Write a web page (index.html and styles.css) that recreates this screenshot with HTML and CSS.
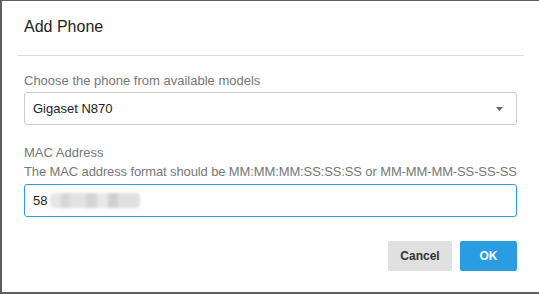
FILE: index.html
```html
<!DOCTYPE html>
<html lang="en">
<head>
  <meta charset="UTF-8" />
  <meta name="viewport" content="width=device-width, initial-scale=1.0" />
  <title>Add Phone</title>
  <link rel="stylesheet" href="styles.css">
</head>
<body>
  <div class="dialog">
    <div class="dialog-header">
      <h1>Add Phone</h1>
    </div>
    <form class="dialog-body" id="addPhoneForm">
      <label for="model">Choose the phone from available models</label>
      <div class="select-wrap">
        <select id="model" name="model">
          <option value="n870">Gigaset N870</option>
        </select>
        <svg class="caret" width="7" height="4" viewBox="0 0 7 4"><path d="M0 0H7L3.5 4Z" fill="#666"/></svg>
      </div>

      <label for="mac" class="mac-label">MAC Address</label>
      <div class="hint">The MAC address format should be MM:MM:MM:SS:SS:SS or MM-MM-MM-SS-SS-SS</div>
      <div class="input-wrap">
        <input type="text" id="mac" name="mac" value="58" />
        <span class="redacted"></span>
      </div>

      <div class="actions">
        <button type="button" class="btn btn-cancel">Cancel</button>
        <button type="submit" class="btn btn-ok">OK</button>
      </div>
    </form>
  </div>
</body>
</html>
```

FILE: styles.css
```css
html, body {
  margin: 0;
  height: 100%;
}
body {
  background: #5f5f5f;
  font-family: "Liberation Sans", Arial, sans-serif;
  padding: 1px 0 0 2px;
  box-sizing: border-box;
}
.dialog {
  background: #fff;
  height: 291px;
}
.dialog-header {
  margin: 0 15px;
  padding: 16px 7px 18px;
  border-bottom: 1px solid #dedede;
}
.dialog-header h1 {
  margin: 0;
  font-size: 16px;
  font-weight: normal;
  line-height: 20px;
  color: #222;
}
.dialog-body {
  padding: 17px 22px 0;
}
label, .hint {
  display: block;
  font-size: 13px;
  line-height: 16px;
  color: #777;
  white-space: nowrap;
}
.hint {
  margin-top: 3px;
  letter-spacing: -0.12px;
}
.select-wrap, .input-wrap {
  position: relative;
  margin-top: 3px;
}
select, input {
  width: 100%;
  height: 33px;
  box-sizing: border-box;
  font-family: inherit;
  font-size: 13px;
  color: #222;
  background: #fff;
  border: 1px solid #ccc;
  border-radius: 3px;
  padding: 0 8px;
  outline: none;
}
select {
  appearance: none;
}
.caret {
  position: absolute;
  right: 14px;
  top: 15px;
}
.mac-label {
  margin-top: 20px;
}
.input-wrap {
  margin-top: 4px;
}
input {
  border-color: #2d9ee0;
}
.redacted {
  position: absolute;
  left: 26px;
  top: 9px;
  width: 90px;
  height: 15px;
  background:
    linear-gradient(90deg, #e6e6e6 0 12%, #d6d6d6 12% 22%, #e2e2e2 22% 40%, #d4d4d4 40% 52%, #e8e8e8 52% 64%, #d0d0d0 64% 76%, #e0e0e0 76% 100%);
  filter: blur(1.5px);
  border-radius: 4px;
}
.actions {
  display: flex;
  justify-content: flex-end;
  gap: 8px;
  margin-top: 24px;
}
.btn {
  height: 30px;
  border: none;
  border-radius: 2px;
  font-family: inherit;
  font-size: 12px;
  font-weight: bold;
}
.btn-cancel {
  width: 64px;
  background: #e0e0e0;
  color: #333;
}
.btn-ok {
  width: 57px;
  background: #2a9de2;
  color: #fff;
}
```
